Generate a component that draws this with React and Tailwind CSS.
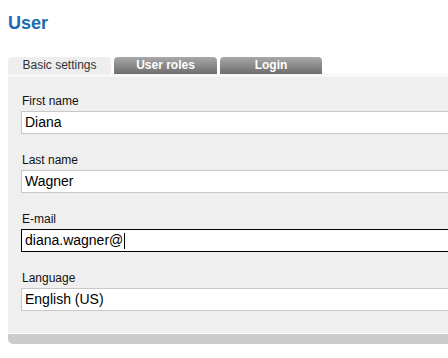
import React from 'react';

const fields = [
  { label: 'First name', value: 'Diana' },
  { label: 'Last name', value: 'Wagner' },
  { label: 'E-mail', value: 'diana.wagner@', focused: true },
  { label: 'Language', value: 'English (US)' },
];

const App = () => {
  return (
    <div className="w-[448px] h-[358px] overflow-hidden bg-white pl-2 pt-[12px] font-['Liberation_Sans',Arial,sans-serif]">
      <h1 className="text-[18px] leading-[22px] font-bold text-[#1b6bb4]">User</h1>

      <div className="mt-[23px] flex gap-[3px] h-[17px]">
        <div className="w-[103px] rounded-t-[4px] bg-[#eeeeee] text-[#333] text-[12px] leading-[17px] text-center">
          Basic settings
        </div>
        <div className="w-[103px] rounded-t-[4px] bg-linear-to-b from-[#a9a9a9] to-[#6e6e6e] text-white font-bold text-[12px] leading-[17px] text-center">
          User roles
        </div>
        <div className="w-[102px] rounded-t-[4px] bg-linear-to-b from-[#a9a9a9] to-[#6e6e6e] text-white font-bold text-[12px] leading-[17px] text-center">
          Login
        </div>
      </div>

      <div className="h-[3px] w-[500px] bg-[#f7f7f7]" />

      <div className="w-[500px] bg-[#efefef] pl-[13px] pt-[17px] pb-[22px] flex flex-col gap-[19px]">
        {fields.map((f) => (
          <div key={f.label}>
            <div className="text-[12px] leading-[14px] text-[#111] pl-px mb-[3px]">{f.label}</div>
            <div
              className={`h-[23px] bg-white border px-[3px] text-[14px] leading-[21px] text-black flex items-center ${
                f.focused ? 'border-black' : 'border-[#c8c8c8]'
              }`}
            >
              {f.value}
              {f.focused && <span className="w-px h-[16px] bg-black ml-px" />}
            </div>
          </div>
        ))}
      </div>

      <div className="h-px w-[500px] bg-white" />
      <div className="h-[10px] w-[500px] bg-[#cbcbcb] rounded-bl-[5px]" />
    </div>
  );
};

export default App;
